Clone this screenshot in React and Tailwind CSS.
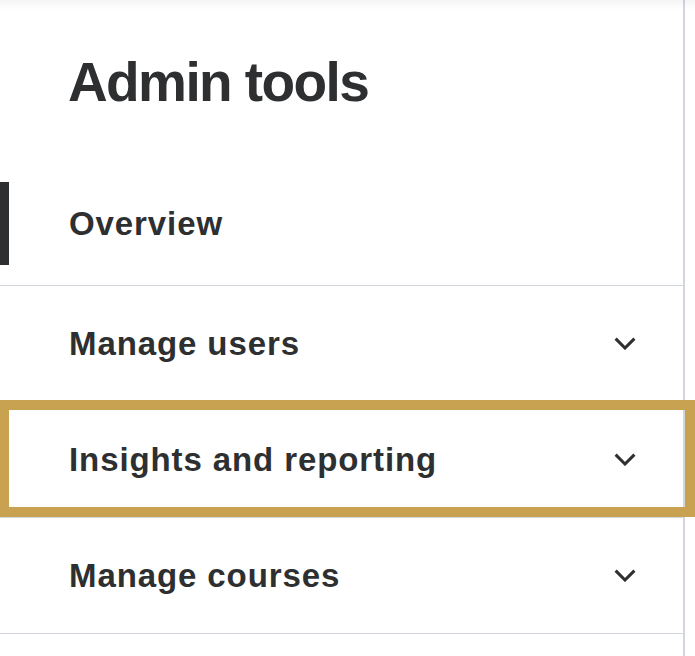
import { useState } from 'react'

const items = [
  { label: 'Overview', active: true },
  { label: 'Manage users', expandable: true },
  { label: 'Insights and reporting', expandable: true, focused: true },
  { label: 'Manage courses', expandable: true },
]

function Chevron() {
  return (
    <svg width="22" height="13" viewBox="0 0 22 13" fill="none" className="shrink-0">
      <polyline points="1.6,1.6 11,11 20.4,1.6" stroke="#2d2f31" strokeWidth="3" />
    </svg>
  )
}

export default function App() {
  const [open, setOpen] = useState(null)

  return (
    <div className="relative min-h-[656px] w-[695px] overflow-hidden bg-white font-['Liberation_Sans',Arial,sans-serif] text-[#2d2f31]">
      {/* faint shadow from the header above */}
      <div className="pointer-events-none absolute inset-x-0 top-0 h-[10px] bg-gradient-to-b from-black/[0.04] to-transparent" />

      <aside className="min-h-[656px] w-[685px] border-r-2 border-[#d1d7dc]">
        <h1 className="pl-[68px] pt-[55px] text-[55px] font-bold leading-[55px] tracking-[-1.6px]">
          Admin tools
        </h1>

        <nav className="mt-[56px]">
          {items.map((item) =>
            item.active ? (
              <div key={item.label} className="relative h-[120px] border-b border-[#d1d7dc] pl-[69px] pt-[38px]">
                <span className="absolute left-0 top-[16px] h-[83px] w-[9px] bg-[#2d2f31]" />
                <span className="block text-[33px] font-bold leading-[40px] tracking-[0.9px]">{item.label}</span>
              </div>
            ) : (
              <button
                key={item.label}
                onClick={() => setOpen(open === item.label ? null : item.label)}
                className="relative flex h-[116px] w-full items-center justify-between border-b border-[#d1d7dc] pl-[69px] pr-[47px] text-left"
              >
                <span className="text-[33px] font-bold leading-[40px] tracking-[0.9px]">{item.label}</span>
                {item.expandable && <Chevron />}
                {item.focused && (
                  <span className="pointer-events-none absolute -top-[2px] bottom-[0px] left-0 w-[695px] border-[10px] border-l-[9px] border-[#c8a151]" />
                )}
              </button>
            )
          )}
        </nav>
      </aside>
    </div>
  )
}
